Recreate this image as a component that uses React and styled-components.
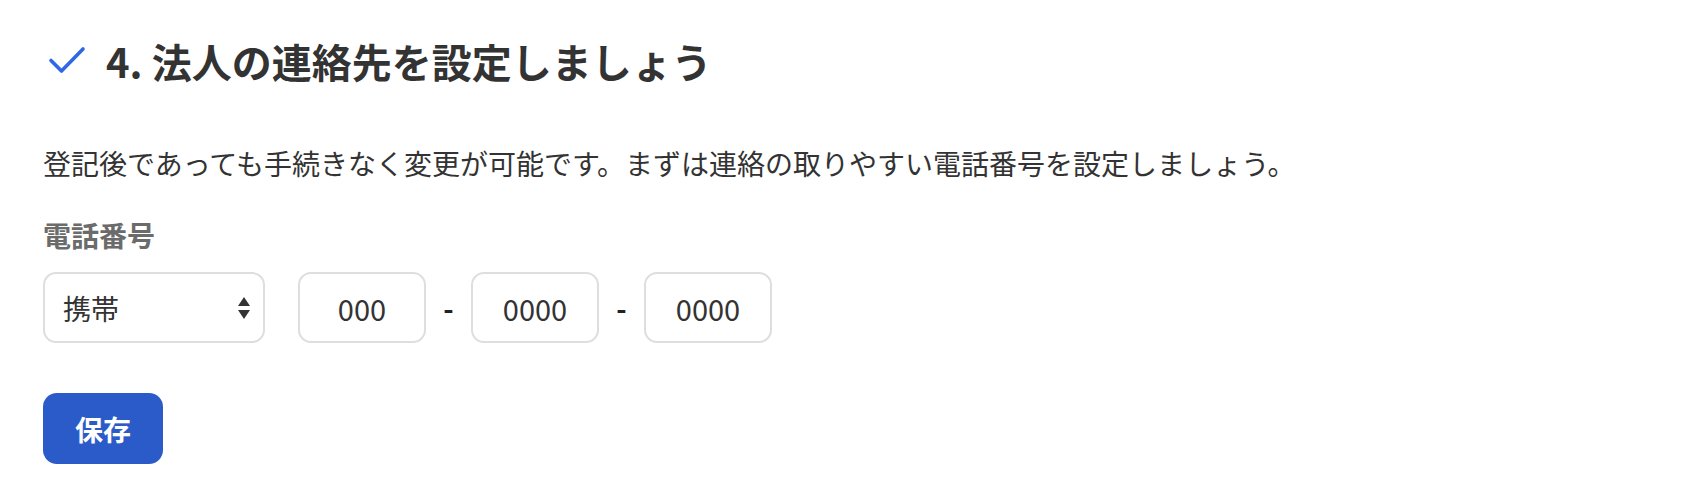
import React from "react";
import styled, { createGlobalStyle } from "styled-components";

const GlobalStyle = createGlobalStyle`
  body {
    margin: 0;
    background: #fff;
    font-family: "Noto Sans CJK JP", "Noto Sans", sans-serif;
    color: #333;
  }
`;

const StyledSection = styled.section`
  padding: 31px 43px 30px;

  .section__title {
    display: flex;
    align-items: center;
    gap: 20px;
    margin: 0;
    height: 60px;
    font-size: 40px;
    font-weight: 700;
    line-height: 60px;
    color: #333;
    padding-left: 5px;
  }

  .section__lead {
    margin: 51px 0 0;
    font-size: 28px;
    line-height: 42px;
    color: #333;
  }

  .section__label {
    margin: 30px 0 0;
    font-size: 28px;
    font-weight: 700;
    line-height: 42px;
    color: #6b6b6b;
  }
`;

const PhoneRow = styled.div`
  display: flex;
  align-items: center;
  margin-top: 16px;
`;

const SelectWrap = styled.div`
  position: relative;
  width: 222px;
  margin-right: 33px;

  svg {
    position: absolute;
    right: 14px;
    top: 50%;
    transform: translateY(-50%);
    pointer-events: none;
  }
`;

const Select = styled.select`
  appearance: none;
  width: 100%;
  height: 71px;
  padding: 0 44px 0 18px;
  border: 2px solid #dedede;
  border-radius: 13px;
  background: #fff;
  font-family: inherit;
  font-size: 28px;
  color: #333;
  outline: none;
`;

const NumberInput = styled.input`
  box-sizing: border-box;
  width: 128px;
  height: 71px;
  border: 2px solid #dedede;
  border-radius: 13px;
  background: #fff;
  text-align: center;
  font-family: inherit;
  font-size: 29px;
  color: #333;
  outline: none;

  &::placeholder {
    color: #333;
  }
`;

const Dash = styled.span`
  width: 45px;
  text-align: center;
  font-size: 28px;
  font-weight: 700;
  color: #222;
`;

const SaveButton = styled.button`
  display: block;
  margin-top: 50px;
  width: 120px;
  height: 71px;
  border: none;
  border-radius: 14px;
  background: #2b5bc8;
  color: #fff;
  font-family: inherit;
  font-size: 28px;
  font-weight: 700;
  cursor: pointer;
`;

const CheckIcon = () => (
  <svg width="38" height="30" viewBox="0 0 38 30" fill="none">
    <path
      d="M3 14.5 L13.5 25 L35 3"
      stroke="#2f68e6"
      strokeWidth="3.6"
      strokeLinecap="round"
      strokeLinejoin="round"
    />
  </svg>
);

const SortIcon = () => (
  <svg width="14" height="24" viewBox="0 0 14 24">
    <path d="M7 1 L13 10 L1 10 Z" fill="#333" />
    <path d="M1 14 L13 14 L7 23 Z" fill="#333" />
  </svg>
);

const App = () => {
  return (
    <>
      <GlobalStyle />
      <StyledSection>
        <h2 className="section__title">
          <CheckIcon />
          <span>4. 法人の連絡先を設定しましょう</span>
        </h2>
        <p className="section__lead">
          登記後であっても手続きなく変更が可能です。まずは連絡の取りやすい電話番号を設定しましょう。
        </p>
        <p className="section__label">電話番号</p>
        <PhoneRow>
          <SelectWrap>
            <Select defaultValue="mobile">
              <option value="mobile">携帯</option>
              <option value="fixed">固定</option>
            </Select>
            <SortIcon />
          </SelectWrap>
          <NumberInput placeholder="000" />
          <Dash>-</Dash>
          <NumberInput placeholder="0000" />
          <Dash>-</Dash>
          <NumberInput placeholder="0000" />
        </PhoneRow>
        <SaveButton>保存</SaveButton>
      </StyledSection>
    </>
  );
};

export default App;
